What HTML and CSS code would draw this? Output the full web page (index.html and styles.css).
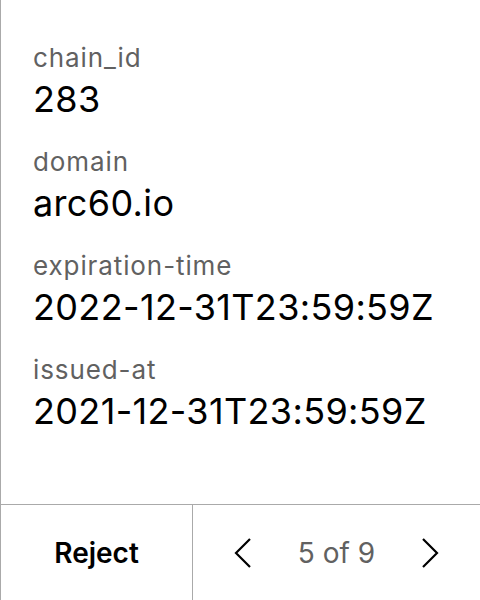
FILE: index.html
```html
<!DOCTYPE html>
<html>
<head>
<meta charset="utf-8">
<link rel="stylesheet" href="styles.css">
</head>
<body>
<div class="panel">
  <div class="fields">
    <div class="field"><div class="label">chain_id</div><div class="value">283</div></div>
    <div class="field"><div class="label">domain</div><div class="value">arc60.io</div></div>
    <div class="field"><div class="label">expiration-time</div><div class="value">2022-12-31T23:59:59Z</div></div>
    <div class="field"><div class="label">issued-at</div><div class="value">2021-12-31T23:59:59Z</div></div>
  </div>
  <div class="footer">
    <button class="reject">Reject</button>
    <div class="pager">
      <svg class="chev" width="18" height="32" viewBox="0 0 18 32"><path d="M16 2 L2 16 L16 30" fill="none" stroke="#000" stroke-width="2.2"/></svg>
      <span class="count">5 of 9</span>
      <svg class="chev" width="18" height="32" viewBox="0 0 18 32"><path d="M2 2 L16 16 L2 30" fill="none" stroke="#000" stroke-width="2.2"/></svg>
    </div>
  </div>
</div>
</body>
</html>
```
FILE: styles.css
```css
html, body { margin: 0; padding: 0; background: #fff; }
body { font-family: Inter, "Noto Sans", sans-serif; }
.panel {
  width: 480px; height: 600px; box-sizing: border-box;
  border-left: 1px solid #aaa;
  display: flex; flex-direction: column;
}
.fields { flex: 1; padding: 42px 32px 0; display: flex; flex-direction: column; gap: 25px; }
.field { display: flex; flex-direction: column; }
.label { font-size: 26px; letter-spacing: 0.9px; color: #616161; line-height: 32px; }
.value { font-size: 36px; letter-spacing: 0.35px; color: #000; line-height: 44px; margin-top: 3px; }
.footer { height: 96px; border-top: 1px solid #aaa; display: flex; box-sizing: border-box; }
.reject {
  width: 192px; border: none; border-right: 1px solid #aaa; background: #fff;
  font-family: inherit; font-size: 28px; font-weight: 600; color: #000; padding: 0;
}
.pager { flex: 1; display: flex; align-items: center; justify-content: space-between; padding: 0 41px 0 41px; }
.count { font-size: 28px; color: #616161; }
.chev { display: block; }
```
